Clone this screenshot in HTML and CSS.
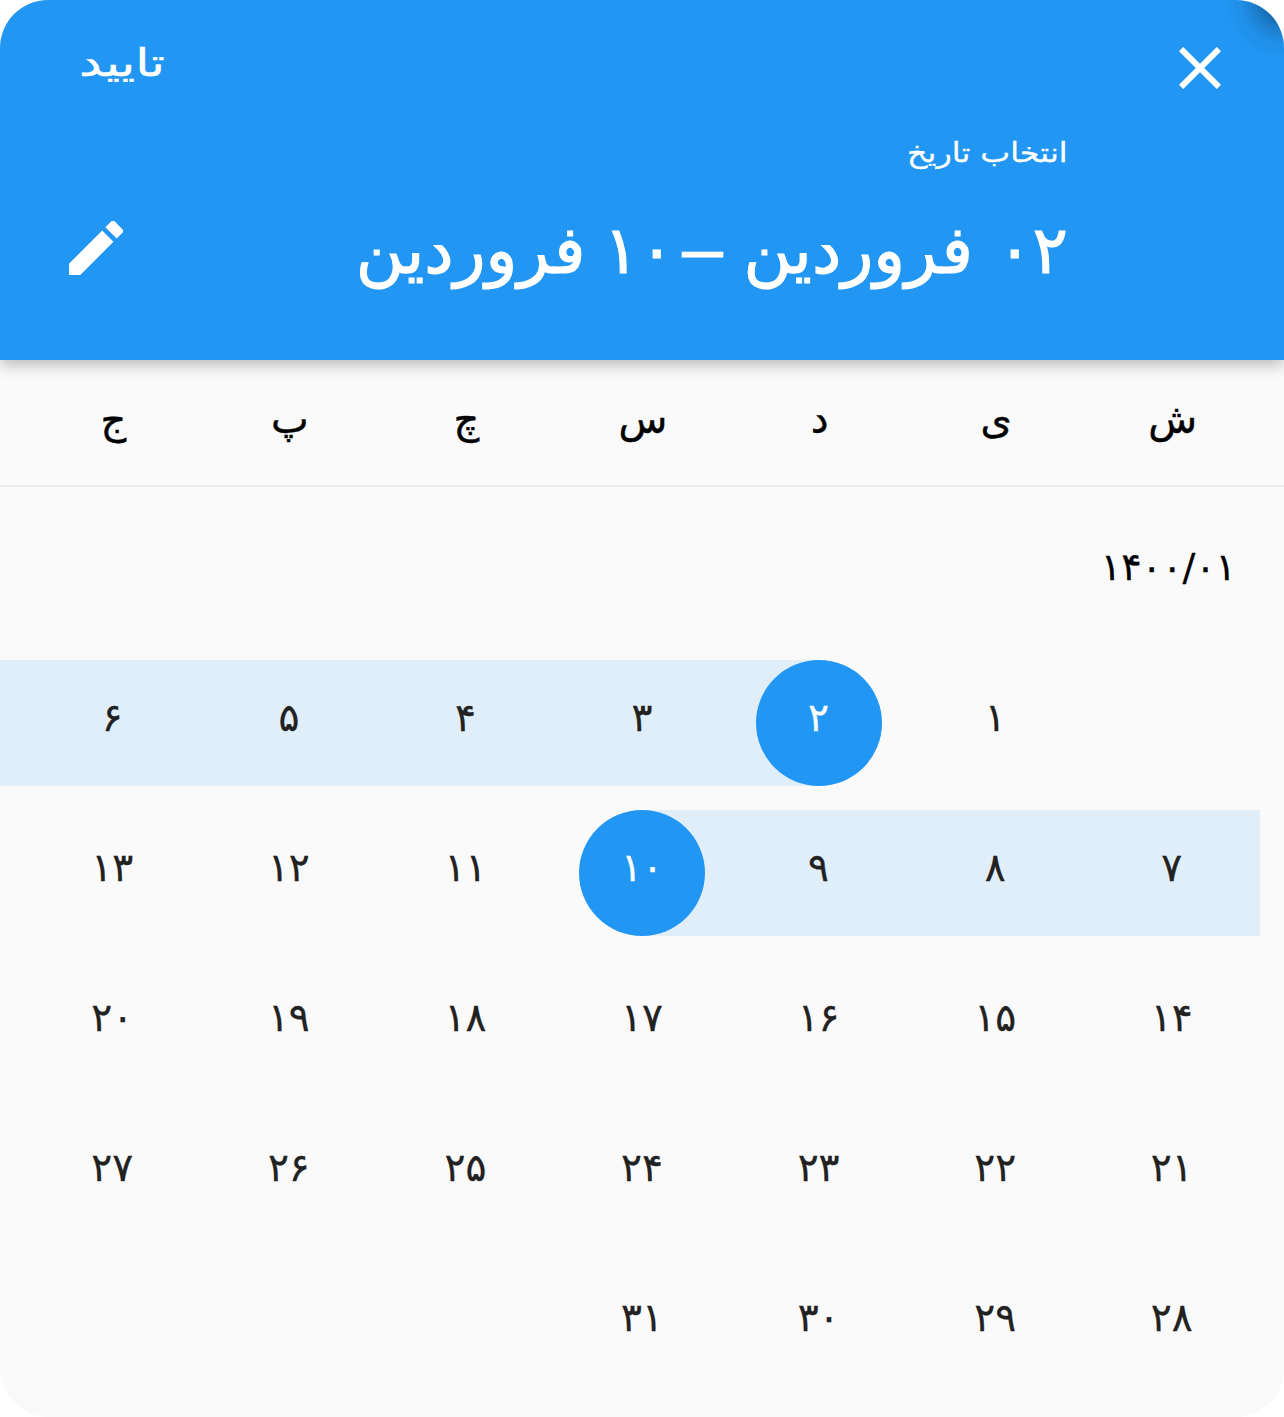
FILE: index.html
```html
<!DOCTYPE html>
<html lang="fa" dir="rtl">
<head>
<meta charset="utf-8">
<title>انتخاب تاریخ</title>
<link rel="stylesheet" href="styles.css">
</head>
<body>
<main class="picker">
  <header class="header">
    <div class="toolbar">
      <button class="icon-button" aria-label="بستن"><svg class="close" viewBox="0 0 42 42"><path fill="#fff" d="M42 4.2 37.8 0 21 16.8 4.2 0 0 4.2 16.8 21 0 37.8 4.2 42 21 25.2 37.8 42 42 37.8 25.2 21z"/></svg></button>
      <button class="confirm"><span class="confirm-text">تایید</span></button>
    </div>
    <div class="label"><span class="label-text">انتخاب تاریخ</span></div>
    <div class="summary">
      <h1 class="title"><span class="num">۰۲</span><span class="month">فروردین</span><span class="dash">–</span><span class="num">۱۰</span><span class="month month-to">فروردین</span></h1>
      <button class="icon-button" aria-label="ویرایش"><svg class="edit" viewBox="3 3 18 18"><path fill="#fff" d="M3 17.25V21h3.75L17.81 9.94l-3.75-3.75L3 17.25zM20.71 7.04a1 1 0 0 0 0-1.41l-2.34-2.34a1 1 0 0 0-1.41 0l-1.83 1.83 3.75 3.75 1.83-1.83z"/></svg></button>
    </div>
  </header>
  <div class="weekdays">
    <span>ش</span><span>ی</span><span>د</span><span>س</span><span>چ</span><span>پ</span><span>ج</span>
  </div>
  <section class="month-view">
    <h2 class="month-title"><span>۱۴۰۰/۰۱</span></h2>
    <div class="days">
      <span class="day"></span><span class="day">۱</span><span class="day start"><b>۲</b></span><span class="day range">۳</span><span class="day range">۴</span><span class="day range">۵</span><span class="day range row-end">۶</span>
      <span class="day range">۷</span><span class="day range">۸</span><span class="day range">۹</span><span class="day end"><b>۱۰</b></span><span class="day">۱۱</span><span class="day">۱۲</span><span class="day">۱۳</span>
      <span class="day">۱۴</span><span class="day">۱۵</span><span class="day">۱۶</span><span class="day">۱۷</span><span class="day">۱۸</span><span class="day">۱۹</span><span class="day">۲۰</span>
      <span class="day">۲۱</span><span class="day">۲۲</span><span class="day">۲۳</span><span class="day">۲۴</span><span class="day">۲۵</span><span class="day">۲۶</span><span class="day">۲۷</span>
      <span class="day">۲۸</span><span class="day">۲۹</span><span class="day">۳۰</span><span class="day">۳۱</span>
    </div>
  </section>
</main>
</body>
</html>
```
FILE: styles.css
```css
* { box-sizing: border-box; }
body { margin: 0; background: #fff; font-family: "DejaVu Sans", sans-serif; }
button { border: 0; padding: 0; background: none; color: inherit; font: inherit; display: block; }
h1, h2 { margin: 0; font-weight: 400; }
svg { display: block; }

.picker { width: 1284px; height: 1417px; border-radius: 48px; overflow: hidden; background: #fafafa; color: #000; }

.header {
  height: 360px;
  padding: 36px 63px 0 69px;
  color: #fff;
  background: radial-gradient(circle at top right, rgba(0,0,0,.3) 18px, rgba(0,0,0,.16) 30px, rgba(0,0,0,.05) 43px, transparent 60px) #2196f3;
  box-shadow: 0 6px 12px -1px rgba(0,0,0,.16), 0 6px 18px rgba(0,0,0,.1);
}
.toolbar { display: flex; justify-content: space-between; align-items: flex-start; height: 92px; }
.close { width: 42px; height: 42px; margin-top: 11px; }
.confirm { height: 54px; padding-left: 10px; font-size: 38px; line-height: 54px; -webkit-text-stroke: .4px currentColor; }
.confirm-text { display: block; transform: scaleX(1.34); transform-origin: left; }
.label { height: 50px; padding-right: 153px; font-size: 27px; line-height: 50px; -webkit-text-stroke: .3px currentColor; }
.label-text { display: inline-block; transform: scaleX(1.175); transform-origin: right; }
.summary { display: flex; justify-content: space-between; align-items: flex-start; height: 140px; padding-right: 153px; }
.title { display: flex; gap: 24px; font-size: 66px; line-height: 145px; white-space: nowrap; -webkit-text-stroke: 1.1px currentColor; }
.dash { margin-left: -12px; transform: scaleX(1.5); }
.month-to { margin-right: -6px; }
.edit { width: 54px; height: 54px; margin-top: 43px; }

.weekdays { display: grid; grid-template-columns: repeat(7, 1fr); height: 127px; padding: 0 23px 0 25px; border-bottom: 2px solid #ebebeb; text-align: center; font-size: 40px; line-height: 118px; -webkit-text-stroke: .4px currentColor; }
.month-title { height: 173px; padding-right: 48px; font-size: 38px; line-height: 160px; -webkit-text-stroke: .3px currentColor; }
.days { display: grid; grid-template-columns: repeat(7, 1fr); grid-auto-rows: 126px; row-gap: 24px; padding: 0 24px; color: #212121; text-align: center; font-size: 39px; line-height: 115px; -webkit-text-stroke: .3px currentColor; }
.range { background: #e0eefa; }
.row-end { margin-left: -24px; padding-left: 24px; }
.start { background: linear-gradient(to right, #e0eefa 50%, transparent 50%); }
.end { background: linear-gradient(to left, #e0eefa 50%, transparent 50%); }
.day b { display: block; width: 126px; height: 126px; margin: 0 auto; border-radius: 50%; background: #2196f3; color: #fff; font-weight: 400; }
```
